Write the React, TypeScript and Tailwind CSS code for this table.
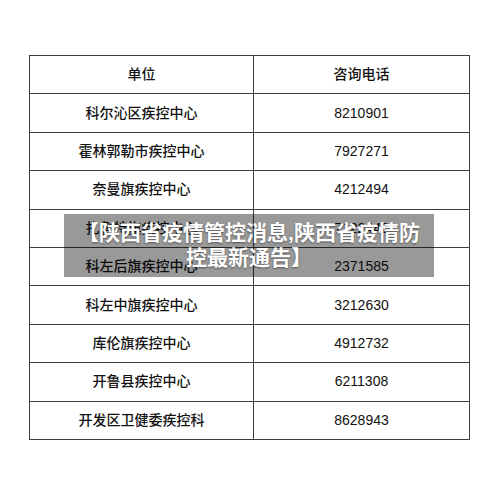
import React from 'react';

interface Row {
  unit: string;
  phone: string;
}

const rows: Row[] = [
  { unit: '科尔沁区疾控中心', phone: '8210901' },
  { unit: '霍林郭勒市疾控中心', phone: '7927271' },
  { unit: '奈曼旗疾控中心', phone: '4212494' },
  { unit: '扎鲁特旗疾控中心', phone: '7122442' },
  { unit: '科左后旗疾控中心', phone: '2371585' },
  { unit: '科左中旗疾控中心', phone: '3212630' },
  { unit: '库伦旗疾控中心', phone: '4912732' },
  { unit: '开鲁县疾控中心', phone: '6211308' },
  { unit: '开发区卫健委疾控科', phone: '8628943' },
];

const cjk = "font-['Liberation_Sans','Noto_Sans_CJK_SC',sans-serif]";

const App = () => {
  return (
    <div className={`relative w-[500px] h-[491px] bg-white ${cjk}`}>
      <div className="pt-[55px] pl-[29px]">
        <table className="w-[441px] border-collapse border border-[#5a5a5a] text-[14px] text-[#111]">
          <thead>
            <tr className="h-[38.4px]">
              <th className="w-[224px] border border-[#3f3f3f] font-medium">单位</th>
              <th className="border border-[#3f3f3f] font-medium">咨询电话</th>
            </tr>
          </thead>
          <tbody>
            {rows.map((row) => (
              <tr key={row.unit} className="h-[38.4px]">
                <td className="border border-[#3f3f3f] text-center font-medium">{row.unit}</td>
                <td className="border border-[#3f3f3f] text-center font-medium">{row.phone}</td>
              </tr>
            ))}
          </tbody>
        </table>
      </div>

      {/* title banner laid over the table */}
      <div className="absolute left-[64px] top-[214px] w-[370px] h-[63px] bg-black/40 pt-[6px] text-center">
        <p className="text-[21px] leading-[25px] font-bold text-white [text-shadow:0_1px_2px_rgba(0,0,0,0.45)]">
          【陕西省疫情管控消息,陕西省疫情防
          <br />
          控最新通告】
        </p>
      </div>
    </div>
  );
};

export default App;
